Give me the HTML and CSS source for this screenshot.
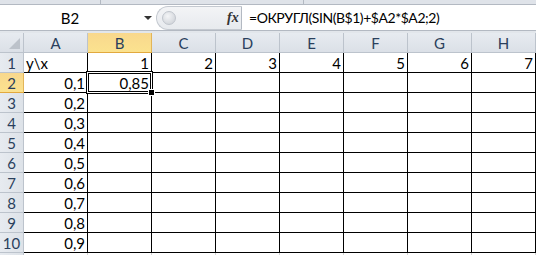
FILE: index.html
```html
<!DOCTYPE html>
<html>
<head>
    <title>Sheet</title>
    <link rel="stylesheet" href="styles.css">
</head>
<body>
    <div class="ribbon-edge">
        <span class="tick tick-a"></span>
        <span class="tick tick-b"></span>
    </div>
    <div class="formula-bar">
        <div class="name-box">
            <span class="name">B2</span>
            <span class="arrow"></span>
        </div>
        <div class="fx-zone">
            <span class="knob"></span>
            <span class="fx"><i>f</i>x</span>
        </div>
        <div class="formula">=ОКРУГЛ(SIN(B$1)+$A2*$A2;2)</div>
    </div>
    <div class="gap"></div>

    <div class="sheet">
        <div class="corner"><span class="tri"></span></div>
        <div class="col-head">A</div>
        <div class="col-head on">B</div>
        <div class="col-head">C</div>
        <div class="col-head">D</div>
        <div class="col-head">E</div>
        <div class="col-head">F</div>
        <div class="col-head">G</div>
        <div class="col-head">H</div>

        <div class="row-head">1</div>
        <div class="cell txt">y\x</div>
        <div class="cell">1</div>
        <div class="cell">2</div>
        <div class="cell">3</div>
        <div class="cell">4</div>
        <div class="cell">5</div>
        <div class="cell">6</div>
        <div class="cell">7</div>

        <div class="row-head on">2</div>
        <div class="cell">0,1</div>
        <div class="cell active">0,85</div>
        <div class="cell"></div><div class="cell"></div><div class="cell"></div><div class="cell"></div><div class="cell"></div><div class="cell"></div>

        <div class="row-head">3</div>
        <div class="cell">0,2</div>
        <div class="cell"></div><div class="cell"></div><div class="cell"></div><div class="cell"></div><div class="cell"></div><div class="cell"></div><div class="cell"></div>

        <div class="row-head">4</div>
        <div class="cell">0,3</div>
        <div class="cell"></div><div class="cell"></div><div class="cell"></div><div class="cell"></div><div class="cell"></div><div class="cell"></div><div class="cell"></div>

        <div class="row-head">5</div>
        <div class="cell">0,4</div>
        <div class="cell"></div><div class="cell"></div><div class="cell"></div><div class="cell"></div><div class="cell"></div><div class="cell"></div><div class="cell"></div>

        <div class="row-head">6</div>
        <div class="cell">0,5</div>
        <div class="cell"></div><div class="cell"></div><div class="cell"></div><div class="cell"></div><div class="cell"></div><div class="cell"></div><div class="cell"></div>

        <div class="row-head">7</div>
        <div class="cell">0,6</div>
        <div class="cell"></div><div class="cell"></div><div class="cell"></div><div class="cell"></div><div class="cell"></div><div class="cell"></div><div class="cell"></div>

        <div class="row-head">8</div>
        <div class="cell">0,7</div>
        <div class="cell"></div><div class="cell"></div><div class="cell"></div><div class="cell"></div><div class="cell"></div><div class="cell"></div><div class="cell"></div>

        <div class="row-head">9</div>
        <div class="cell">0,8</div>
        <div class="cell"></div><div class="cell"></div><div class="cell"></div><div class="cell"></div><div class="cell"></div><div class="cell"></div><div class="cell"></div>

        <div class="row-head">10</div>
        <div class="cell">0,9</div>
        <div class="cell"></div><div class="cell"></div><div class="cell"></div><div class="cell"></div><div class="cell"></div><div class="cell"></div><div class="cell"></div>

        <div class="row-head"></div>
        <div class="cell plain"></div><div class="cell plain"></div><div class="cell plain"></div><div class="cell plain"></div>
        <div class="cell plain"></div><div class="cell plain"></div><div class="cell plain"></div><div class="cell plain"></div>
    </div>
</body>
</html>
```

FILE: styles.css
```css
body {
    margin: 0;
    width: 536px;
    height: 255px;
    overflow: hidden;
    background: #ffffff;
    font-family: Lato, "Liberation Sans", sans-serif;
    font-size: 14px;
    color: #000;
}

.ribbon-edge {
    height: 4px;
    background: #dfe3e9;
    border-bottom: 1px solid #b3b9c2;
    display: flex;
}
.tick {
    width: 1px;
    height: 4px;
    background: #b3b9c2;
}
.tick-a { margin-left: 100px; }
.tick-b { margin-left: 202px; }

.formula-bar {
    height: 25px;
    display: flex;
    border-bottom: 1px solid #b3b9c2;
}
.name-box {
    width: 156px;
    display: flex;
    align-items: center;
    background: #fff;
}
.name {
    width: 140px;
    text-align: center;
    font-size: 15px;
}
.arrow {
    margin-left: 4px;
    border-left: 4px solid transparent;
    border-right: 4px solid transparent;
    border-top: 4px solid #333;
}
.fx-zone {
    width: 86px;
    display: flex;
    align-items: center;
    background: linear-gradient(#f3f4f6, #e7eaee);
    border: 1px solid #c4c9d0;
    border-right: 1px solid #b3b9c2;
    border-radius: 12px 0 0 12px;
    box-sizing: border-box;
    height: 24px;
    margin-top: 1px;
}
.knob {
    width: 12px;
    height: 12px;
    margin-left: 5px;
    border-radius: 50%;
    background: radial-gradient(circle at 40% 35%, #f4f5f7, #c9cdd3);
    border: 1px solid #c0c5cc;
}
.fx {
    margin-left: 51px;
    font-family: "Liberation Serif", serif;
    font-size: 14px;
    font-weight: bold;
    font-style: italic;
    color: #333;
}
.formula {
    flex: 1;
    display: flex;
    align-items: center;
    padding-left: 7px;
    font-size: 14px;
    letter-spacing: -0.45px;
    background: #fff;
}

.gap {
    height: 2px;
    background: #e2e6eb;
}

.sheet {
    display: grid;
    grid-template-columns: 24px repeat(8, 64px);
    grid-auto-rows: 20px;
}
.corner,
.col-head,
.row-head {
    box-sizing: border-box;
    background: linear-gradient(#e7ebf0, #dbe0e7);
    border-right: 1px solid #bcc3cc;
    border-bottom: 1px solid #bcc3cc;
    color: #2a3f5c;
    font-size: 15px;
    display: flex;
    align-items: center;
    justify-content: center;
}
.corner {
    position: relative;
}
.tri {
    position: absolute;
    right: 3px;
    bottom: 3px;
    border-left: 11px solid transparent;
    border-bottom: 11px solid #bcc2ca;
}
.col-head.on,
.row-head.on {
    background: linear-gradient(#f8d88d, #fbe28f);
    border-right-color: #e2b559;
    border-bottom-color: #e2a93e;
}
.row-head {
    background: linear-gradient(90deg, #e7ebf0, #dde2e8);
}

.cell {
    box-sizing: border-box;
    border-right: 1px solid #000;
    border-bottom: 1px solid #000;
    text-align: right;
    padding: 1px 2px 0 2px;
    line-height: 18px;
    font-size: 15px;
}
.cell.txt {
    text-align: left;
}
.cell.plain {
    border-right: 1px solid #d4d4d4;
    border-bottom: none;
}

.cell.active {
    position: relative;
}
.cell.active::after {
    content: "";
    position: absolute;
    left: -2px;
    top: -2px;
    right: -2px;
    bottom: -2px;
    border: 1px solid #000;
    box-shadow: inset 0 0 0 1px #fff, inset 0 0 0 2px #000;
    pointer-events: none;
}
.cell.active::before {
    content: "";
    position: absolute;
    right: -4px;
    bottom: -4px;
    width: 5px;
    height: 5px;
    background: #000;
    border: 1px solid #fff;
    z-index: 2;
}
```
